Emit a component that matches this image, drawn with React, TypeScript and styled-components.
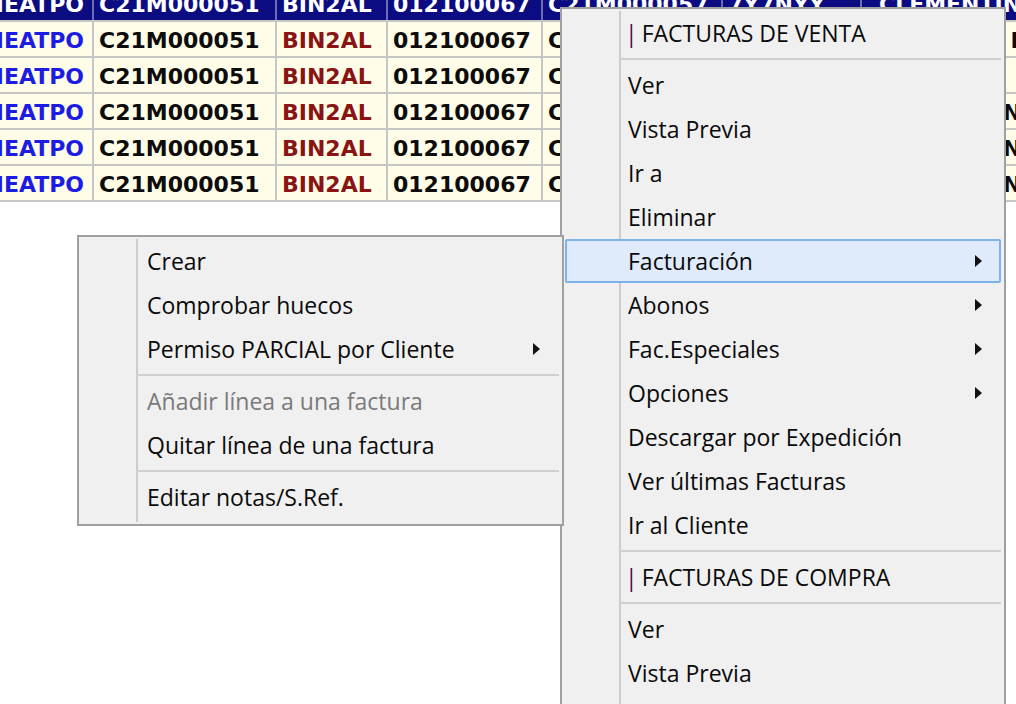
import React from "react";
import styled, { createGlobalStyle, css } from "styled-components";

type Tone = "blue" | "red" | "black";

const GlobalStyle = createGlobalStyle`
    html, body {
        margin: 0;
        padding: 0;
        background: #ffffff;
    }
    body {
        overflow: hidden;
    }
`

const columns: { width: number; tone: Tone; pad: number }[] = [
    { width: 117, tone: "blue", pad: 5 },
    { width: 183, tone: "black", pad: 5 },
    { width: 111, tone: "red", pad: 5 },
    { width: 155, tone: "black", pad: 5 },
    { width: 180, tone: "black", pad: 5 },
    { width: 139, tone: "black", pad: 5 },
    { width: 210, tone: "black", pad: 17 },
    { width: 160, tone: "black", pad: 5 },
]

const selectedRow = ["MEATPO", "C21M000051", "BIN2AL", "012100067", "C21M000057", "7Y7NYY", "CLEMENTINA", "NARANJA"]

const rows = [
    ["MEATPO", "C21M000051", "BIN2AL", "012100067", "C21M000052", "7Y7NYY", "CLEMENTI MED", ""],
    ["MEATPO", "C21M000051", "BIN2AL", "012100067", "C21M000053", "", "", ""],
    ["MEATPO", "C21M000051", "BIN2AL", "012100067", "C21M000054", "7Y7NYY", "CLEMENTINA", ""],
    ["MEATPO", "C21M000051", "BIN2AL", "012100067", "C21M000055", "7Y7NYY", "CLEMENTINA", ""],
    ["MEATPO", "C21M000051", "BIN2AL", "012100067", "C21M000056", "7Y7NYY", "CLEMENTINA", ""],
]

type MenuEntry =
    | { kind: "item"; label: string; submenu?: boolean; disabled?: boolean; active?: boolean; title?: boolean }
    | { kind: "sep" }

const leftMenu: MenuEntry[] = [
    { kind: "item", label: "Crear" },
    { kind: "item", label: "Comprobar huecos" },
    { kind: "item", label: "Permiso PARCIAL por Cliente", submenu: true },
    { kind: "sep" },
    { kind: "item", label: "Añadir línea a una factura", disabled: true },
    { kind: "item", label: "Quitar línea de una factura" },
    { kind: "sep" },
    { kind: "item", label: "Editar notas/S.Ref." },
]

const rightMenu: MenuEntry[] = [
    { kind: "item", label: "FACTURAS DE VENTA", title: true },
    { kind: "sep" },
    { kind: "item", label: "Ver" },
    { kind: "item", label: "Vista Previa" },
    { kind: "item", label: "Ir a" },
    { kind: "item", label: "Eliminar" },
    { kind: "item", label: "Facturación", submenu: true, active: true },
    { kind: "item", label: "Abonos", submenu: true },
    { kind: "item", label: "Fac.Especiales", submenu: true },
    { kind: "item", label: "Opciones", submenu: true },
    { kind: "item", label: "Descargar por Expedición" },
    { kind: "item", label: "Ver últimas Facturas" },
    { kind: "item", label: "Ir al Cliente" },
    { kind: "sep" },
    { kind: "item", label: "FACTURAS DE COMPRA", title: true },
    { kind: "sep" },
    { kind: "item", label: "Ver" },
    { kind: "item", label: "Vista Previa" },
    { kind: "item", label: "Ir a" },
    { kind: "item", label: "Eliminar" },
]

const MenuList = ({ entries, indent }: { entries: MenuEntry[]; indent: number }) => (
    <>
        {entries.map((entry, i) =>
            entry.kind === "sep" ? (
                <Separator key={i} />
            ) : (
                <Item key={i} $indent={indent} $active={entry.active} $disabled={entry.disabled}>
                    <Label>
                        {entry.title && <Pipe>|</Pipe>}
                        {entry.label}
                    </Label>
                    {entry.submenu && <Arrow />}
                </Item>
            )
        )}
    </>
)

export default function App() {
    return (
        <Page>
            <GlobalStyle />
            <Grid>
                <Row $selected>
                    {selectedRow.map((text, i) => (
                        <Cell key={i} $width={columns[i].width} $pad={columns[i].pad} $tone={columns[i].tone} $selected>
                            {text}
                        </Cell>
                    ))}
                </Row>
                {rows.map((row, r) => (
                    <Row key={r}>
                        {row.map((text, i) => (
                            <Cell key={i} $width={columns[i].width} $pad={columns[i].pad} $tone={columns[i].tone}>
                                {text}
                            </Cell>
                        ))}
                    </Row>
                ))}
            </Grid>
            <Menu $left={560} $top={7} $width={446} $layer={1}>
                <MenuList entries={rightMenu} indent={61} />
            </Menu>
            <Menu $left={77} $top={235} $width={487} $layer={2}>
                <MenuList entries={leftMenu} indent={63} />
            </Menu>
        </Page>
    )
}

const Page = styled.div`
    position: relative;
    width: 1016px;
    height: 704px;
    overflow: hidden;
    background: #ffffff;
`

const Grid = styled.div`
    display: flex;
    flex-direction: column;
    margin-top: -14px;
    margin-left: -23px;
    width: max-content;
`

const Row = styled.div<{ $selected?: boolean }>`
    display: flex;
    flex-direction: row;
    height: 36px;
    box-sizing: border-box;
    border-bottom: 2px solid #c6c6c6;
    background: ${({ $selected }) => ($selected ? "#0c0c82" : "#fffde8")};
`

const toneColor: Record<Tone, string> = {
    blue: "#1c1ce2",
    red: "#8a1414",
    black: "#0c0c0c",
}

const Cell = styled.div<{ $width: number; $pad: number; $tone: Tone; $selected?: boolean }>`
    width: ${({ $width }) => $width}px;
    flex: none;
    box-sizing: border-box;
    padding: 2px 0 0 ${({ $pad }) => $pad}px;
    border-right: 2px solid #c6c6c6;
    display: flex;
    align-items: center;
    overflow: hidden;
    white-space: nowrap;
    font-family: "DejaVu Sans", Verdana, sans-serif;
    font-weight: bold;
    font-size: 22px;
    color: ${({ $tone }) => toneColor[$tone]};

    ${({ $selected }) => $selected && css`
        color: #ffffff;
        border-right-color: #6d6db0;
    `}
`

const Menu = styled.div<{ $left: number; $top: number; $width: number; $layer: number }>`
    position: absolute;
    left: ${({ $left }) => $left}px;
    top: ${({ $top }) => $top}px;
    width: ${({ $width }) => $width}px;
    z-index: ${({ $layer }) => $layer};
    box-sizing: border-box;
    padding: 2px 3px 5px 3px;
    border: 2px solid #a0a0a0;
    background: #f0f0f0;
    display: flex;
    flex-direction: column;

    &::before {
        content: "";
        position: absolute;
        left: 57px;
        top: 2px;
        bottom: 2px;
        width: 2px;
        background: #cdcdcd;
    }
`

const Item = styled.div<{ $indent: number; $active?: boolean; $disabled?: boolean }>`
    position: relative;
    z-index: 1;
    height: 44px;
    box-sizing: border-box;
    display: flex;
    align-items: center;
    padding-left: ${({ $indent }) => $indent}px;
    border: 2px solid transparent;
    border-radius: 2px;
    color: ${({ $disabled }) => ($disabled ? "#7a7a7a" : "#0a0a0a")};

    ${({ $active }) => $active && css`
        background: #dfeafb;
        border-color: #7cb3ec;
    `}
`

const Label = styled.span`
    flex: 1;
    font-family: "Open Sans", "Noto Sans", sans-serif;
    font-size: 23px;
    white-space: nowrap;
`

const Pipe = styled.span`
    color: #4a1040;
    margin: 0 4px 0 -3px;
`

const Arrow = styled.span`
    width: 0;
    height: 0;
    margin-right: 17px;
    border-left: 7px solid #111111;
    border-top: 6px solid transparent;
    border-bottom: 6px solid transparent;
`

const Separator = styled.div`
    position: relative;
    z-index: 1;
    height: 8px;
    margin-left: 54px;
    display: flex;
    align-items: center;

    &::after {
        content: "";
        flex: 1;
        height: 2px;
        background: #d0d0d0;
    }
`
